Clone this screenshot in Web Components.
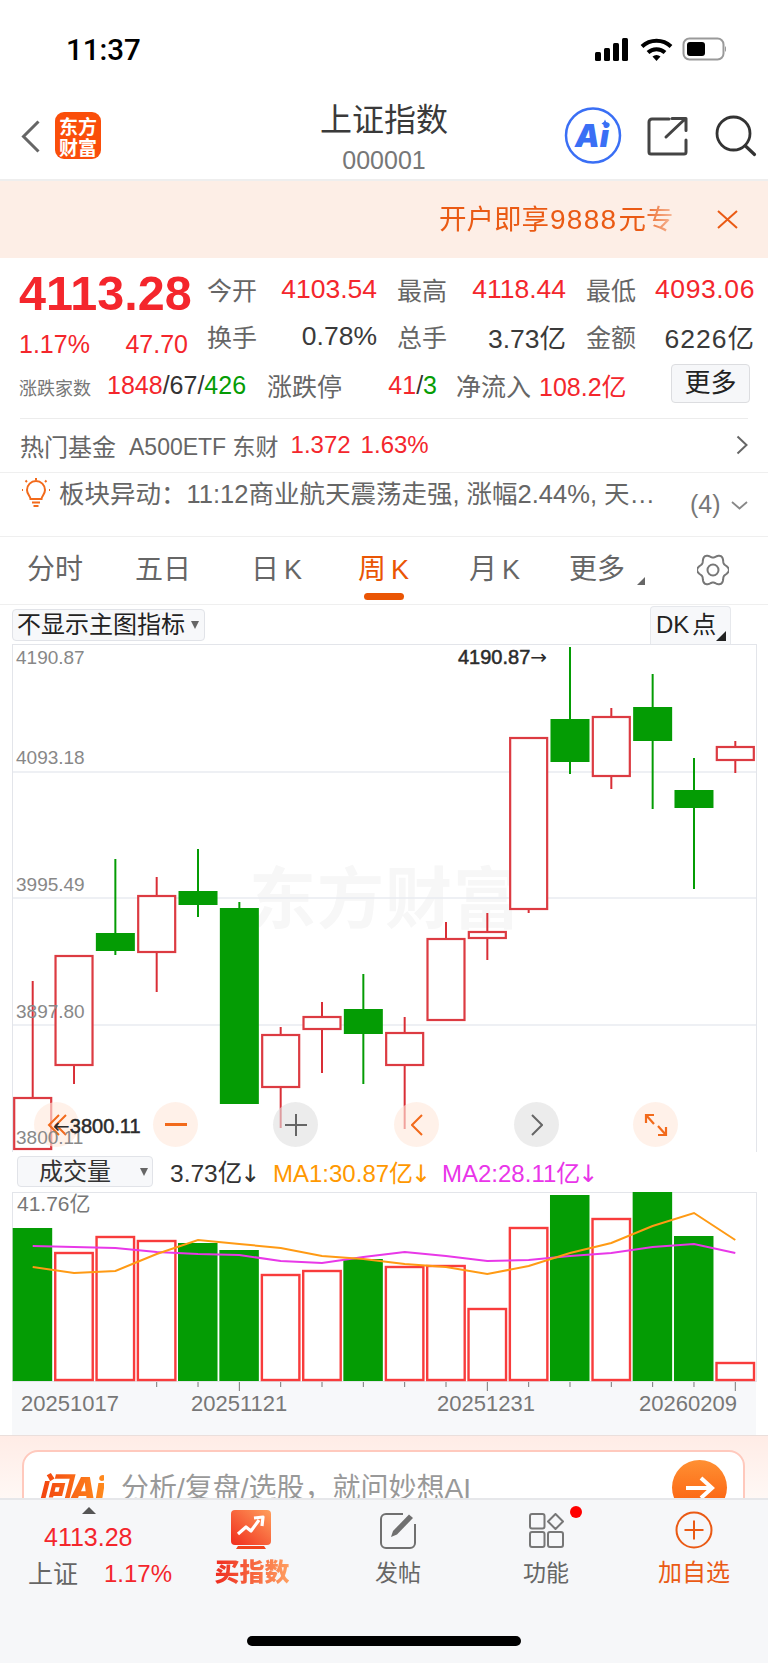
<!DOCTYPE html>
<html lang="zh"><head><meta charset="utf-8"><title>上证指数</title>
<style>
html,body{margin:0;padding:0;background:#fff}
body{width:768px;height:1663px;overflow:hidden;font-family:"Liberation Sans","Noto Sans CJK SC",sans-serif;color:#333}
</style></head><body>
<status-bar></status-bar>
<nav-header></nav-header>
<promo-banner></promo-banner>
<quote-panel></quote-panel>
<fund-row></fund-row>
<alert-row></alert-row>
<period-tabs></period-tabs>
<chart-toolbar></chart-toolbar>
<kline-chart></kline-chart>
<volume-legend></volume-legend>
<volume-chart></volume-chart>
<ai-ask></ai-ask>
<bottom-bar></bottom-bar>
<script>
const FONT='"Liberation Sans","Noto Sans CJK SC",sans-serif';
function def(name,css,html,init){
  customElements.define(name,class extends HTMLElement{
    constructor(){super();const r=this.attachShadow({mode:'open'});
      r.innerHTML='<style>:host{display:block;box-sizing:border-box;font-family:'+FONT+'}*{box-sizing:border-box}'+css+'</style>'+html;
      if(init)init(r);}
  });
}
const RED='#f4262c',GREEN='#049c04',GREY='#666';

def('status-bar',`:host{height:88px;position:relative}
.row{display:flex;height:88px;align-items:flex-start;padding:33px 0 0 66px}
.t{font:500 29.5px/34px Roboto,sans-serif;color:#000;flex:1}
svg{display:block;margin-top:4px;margin-right:42px}`,
`<div class="row"><span class="t">11:37</span>
<svg width="131" height="24" viewBox="0 0 131 24">
<g fill="#000"><rect x="0" y="15" width="6" height="9" rx="1.5"/><rect x="9" y="11" width="6" height="13" rx="1.5"/><rect x="18" y="6" width="6" height="18" rx="1.5"/><rect x="27" y="1" width="6" height="23" rx="1.5"/></g>
<g fill="none" stroke="#000" stroke-width="4"><path d="M47 9.5a21 21 0 0 1 29 0"/><path d="M53 15.5a12.500 12.500 0 0 1 17 0"/></g><path d="M57.500 19.500a6 6 0 0 1 8 0l-4 4.500z" fill="#000"/>
<rect x="88.500" y="1.500" width="40" height="21" rx="6" fill="none" stroke="#9a9a9a" stroke-width="2"/><rect x="92" y="5" width="18" height="14" rx="3" fill="#000"/><path d="M130 9v6a3 3 0 0 0 1-3 3 3 0 0 0-1-3z" fill="#9a9a9a"/>
</svg></div>`);

def('nav-header',`:host{height:91px;position:relative}
.c{display:flex;height:91px;align-items:flex-start;padding-top:20px;padding-left:21px}
.logo{width:46px;height:47px;margin-left:15px;margin-top:4px;border-radius:9px;background:#fa4e0a;color:#fff;display:flex;flex-direction:column;align-items:center;justify-content:center;gap:0;position:relative;z-index:1}
.logo span{font:700 19px/21px "Noto Sans CJK SC",sans-serif;display:block}
.mid{position:absolute;left:0;right:0;top:10px;text-align:center;pointer-events:none}
.ti{font:400 32px/38px "Noto Sans CJK SC",sans-serif;color:#3a3a3a}
.co{font:400 25px/28px "Liberation Sans",sans-serif;color:#777;margin-top:10px;}
.ai{position:absolute;left:564px;top:19px}
.sh{position:absolute;left:647px;top:28px}
.se{position:absolute;left:715px;top:27px}
.ait{font:italic 900 31px Inter,"Liberation Sans",sans-serif;fill:#3a6ff5}`,
`<div class="c">
<svg width="19" height="33" viewBox="0 0 19 33" style="margin-top:12px"><path d="M17.500 1.500 2.500 16.500l15 15" fill="none" stroke="#666" stroke-width="3"/></svg>
<div class="logo"><span>东方</span><span>财富</span></div>
<svg class="ai" width="58" height="58" viewBox="0 0 58 58"><circle cx="29" cy="28.500" r="27" fill="#fff" stroke="#3a6ff5" stroke-width="2.500"/><text class="ait" x="11" y="40">Ai</text><path d="M41 12.500q.6 3 3.500 4-2.900 1-3.500 4-.6-3-3.500-4 2.900-1 3.500-4z" fill="#3a6ff5"/></svg>
<svg class="sh" width="41" height="40" viewBox="0 0 41 40"><path d="M22 3H5a3 3 0 0 0-3 3v30a2 2 0 0 0 2 2h33a2 2 0 0 0 2-2V24M19 21 38 3M25 2.500h14v12" fill="none" stroke="#444" stroke-width="3" stroke-linecap="round" stroke-linejoin="round"/></svg>
<svg class="se" width="42" height="42" viewBox="0 0 42 42"><circle cx="18.500" cy="18.500" r="16.500" fill="none" stroke="#333" stroke-width="2.800"/><path d="m30.500 31 9 8.500" stroke="#333" stroke-width="3.200" stroke-linecap="round"/></svg>
</div>
<div class="mid"><div class="ti">上证指数</div><div class="co">000001</div></div>`);

def('promo-banner',`:host{height:79px;background:#fdeee6;border-top:2px solid #eeeeee;position:relative}
.row{display:flex;align-items:center;justify-content:flex-end;height:77px;padding-right:30px}
.txt{width:252px;white-space:nowrap;color:#ea5a14;font:400 27.500px/34px "Liberation Sans","Noto Sans CJK SC",sans-serif;-webkit-mask-image:linear-gradient(to right,#000 80%,transparent 100%);mask-image:linear-gradient(to right,#000 80%,transparent 100%);margin-right:26px}
.txt b{font-weight:400;font-size:28px;letter-spacing:1.300px;margin:0 1px 0 1px}
svg{display:block}`,
`<div class="row"><div class="txt">开户即享<b>9888</b>元专</div><svg width="21" height="19" viewBox="0 0 21 19"><path d="M1 1l19 17M20 1 1 18" stroke="#ea5a14" stroke-width="2" fill="none"/></svg></div>`);

def('quote-panel',`:host{height:161px;padding-top:8px;color:#333}
.g{display:grid;grid-template-columns:188px 50px 120px 20px 50px 119px 20px 49px 120px;grid-template-rows:46px 48px;padding-left:19px;align-items:center;font-size:26.500px}
.l{color:#666;font-size:25px;font-weight:400;white-space:nowrap}
.v{text-align:right;white-space:nowrap}
.r{color:${RED}}
.d{color:#3a3a3a}
.p{font-weight:700;font-size:48.500px;line-height:50px;color:${RED};margin-top:7px;white-space:nowrap}
.s{display:flex;justify-content:space-between;color:${RED};font-size:25px;width:169px;margin-top:17px}
.h{display:grid;grid-template-columns:88px 160px 76px 113px 83px 132px 79px;height:50px;padding-left:19px;align-items:center;font-size:25px}
.sm{font-size:18px;color:#777;white-space:nowrap;margin-top:4px}
.g2{color:${GREEN}}
.btn{width:79px;height:39px;background:#f6f7f9;border:1px solid #dcdde0;border-radius:4px;font-size:26px;line-height:37px;text-align:center;color:#222;margin-top:-3px}
.line{height:1px;background:#ececec;margin:8px 20px 0 20px}`,
`<div class="g">
<div class="p">4113.28</div><div class="l">今开</div><div class="v r">4103.54</div><i></i><div class="l">最高</div><div class="v r">4118.44</div><i></i><div class="l">最低</div><div class="v r" style="letter-spacing:.6px">4093.06</div>
<div class="s"><span>1.17%</span><span>47.70</span></div><div class="l">换手</div><div class="v d">0.78%</div><i></i><div class="l">总手</div><div class="v d">3.73亿</div><i></i><div class="l">金额</div><div class="v d" style="letter-spacing:1px">6226亿</div>
</div>
<div class="h"><div class="sm">涨跌家数</div><div><span class="r">1848</span>/67/<span class="g2">426</span></div><div class="l">涨跌停</div><div class="v" style="padding-right:19px"><span class="r">41</span>/<span class="g2">3</span></div><div class="l">净流入</div><div class="r" style="white-space:nowrap">108.2亿</div><div class="btn">更多</div></div>
<div class="line"></div>`);

def('fund-row',`:host{height:54px;border-bottom:1px solid #efefef}
.r{display:flex;height:52px;align-items:center;padding-left:20px;font-size:24px;white-space:nowrap;color:#666}
.n{margin-left:13px;font-size:23px}
.v{color:${RED}}
svg{margin-left:auto;margin-right:20px}`,
`<div class="r"><span>热门基金</span><span class="n">A500ETF 东财</span><span class="v" style="margin-left:12px">1.372</span><span class="v" style="margin-left:10px">1.63%</span>
<svg width="12" height="20" viewBox="0 0 12 20"><path d="M1.500 1.500 10.500 10l-9 8.500" fill="none" stroke="#666" stroke-width="2"/></svg></div>`);

def('alert-row',`:host{height:64px;border-bottom:1px solid #efefef;position:relative}
.r{padding:5px 0 0 22px;font-size:25.500px;color:#666;white-space:nowrap;display:flex;align-items:flex-start}
.tx{margin-left:9px;line-height:30px;margin-top:1px}
.n{position:absolute;left:690px;top:16px;line-height:30px;font-size:25px;color:#777}
svg.c{position:absolute;left:731px;top:28px}`,
`<div class="r"><svg width="28" height="30" viewBox="0 0 28 30" style="display:block;flex:none"><g fill="none" stroke="#f26a1b" stroke-width="2"><path d="M8.500 21c0-3-3.500-4.500-3.500-9a9 9 0 0 1 18 0c0 4.500-3.500 6-3.500 9z"/><path d="M10 24.500h8M11.500 28h5M14 0v2M1 12H0M28 12h-1M3.500 2.500l1.500 1.500M24.500 2.500 23 4"/></g></svg>
<span class="tx">板块异动：11:12商业航天震荡走强, 涨幅2.44%, 天…</span></div><span class="n">(4)</span><svg class="c" width="17" height="9" viewBox="0 0 17 9"><path d="M1 1l7.500 6.500L16 1" fill="none" stroke="#888" stroke-width="1.800"/></svg>`);

const gearPts=(()=>{let p=[];for(let i=0;i<120;i++){const t=i/120*2*Math.PI,r=14.2+1.7*Math.cos(6*t);p.push((16+r*Math.cos(t)).toFixed(2)+','+(16+r*Math.sin(t)).toFixed(2));}return p.join(' ');})();

def('period-tabs',`:host{height:68px;border-bottom:1px solid #efefef;position:relative}
.r{position:relative;height:67px;font-size:28px;color:#666;white-space:nowrap}
span{position:absolute;top:15px;line-height:36px}
.a{color:#ea5504}
.u{position:absolute;left:364px;top:56px;width:40px;height:7px;border-radius:3.500px;background:#ea5504}
.k{font-size:27px;margin-left:5px;font-weight:400}
svg{position:absolute}`,
`<div class="r"><span style="left:27px">分时</span><span style="left:135px">五日</span><span style="left:251px">日<b class="k">K</b></span><span class="a" style="left:358px">周<b class="k">K</b></span><span style="left:469px">月<b class="k">K</b></span><span style="left:569px">更多</span>
<svg style="left:637px;top:40px" width="8" height="8" viewBox="0 0 8 8"><path d="M8 0v8H0z" fill="#666"/></svg>
<svg style="left:696.500px;top:16.500px" width="32" height="32" viewBox="0 0 32 32"><polygon points="${gearPts}" fill="none" stroke="#777" stroke-width="2"/><circle cx="16" cy="16" r="5.500" fill="none" stroke="#777" stroke-width="2"/></svg>
<div class="u"></div></div>`);

def('chart-toolbar',`:host{height:39px;position:relative}
.r{display:flex;align-items:flex-start;padding-left:12px}
.a{height:32px;width:193px;margin-top:4px;background:#f7f8fa;border:1px solid #e1e3e8;border-radius:4px;font-size:24px;line-height:30px;padding-left:4px;color:#222;position:relative;white-space:nowrap}
.a::after{content:"";position:absolute;left:178px;top:11px;border:4px solid transparent;border-top:8px solid #666;border-bottom:0}
.b{height:38px;width:81px;margin-left:445px;margin-top:1px;background:#f7f8fa;border:1px solid #e6e8ec;border-bottom:0;border-radius:4px 4px 0 0;font-size:24px;line-height:36px;padding-left:5px;color:#222;position:relative;white-space:nowrap}
.b i{font-style:normal;margin-left:3px}
.b::after{content:"";position:absolute;right:4px;bottom:3px;border-style:solid;border-width:0 0 10px 10px;border-color:transparent transparent #222 transparent}`,
`<div class="r"><div class="a">不显示主图指标</div><div class="b">DK<i>点</i></div></div>`);

const CX=i=>32.7+i*41.33;
const CANDLES=[
['r',981,1098,1149,1149],['r',956,956,1065,1084],['g',859,933,951,955],['r',877,896,952,992],['g',849,891,905,917],['g',902,908,1104,1104],
['r',1027,1035,1087,1128],['r',1002,1017,1029,1073],['g',974,1009,1034,1084],['r',1017,1033,1065,1129],['r',922,939,1020,1020],['r',913,932,938,960],
['r',737,738,909,913],['g',647,719,762,774],['r',708,717,776,789],['g',674,707,741,809],['g',758,790,808,889],['r',741,747,760,773]];

def('kline-chart',`:host{height:508px;position:relative;overflow:hidden}
.box{position:absolute;left:12px;top:0;width:745px;height:509px;border:1px solid #e3e5ea}
svg{position:absolute;left:0;top:0}
.wm{position:absolute;left:249px;top:210px;font:700 67px/80px "Noto Sans CJK SC",sans-serif;color:#f7f7f7;white-space:nowrap;letter-spacing:1px}
.lb{position:absolute;left:16px;font-size:19px;line-height:22px;color:#888;white-space:nowrap}
.mk{position:absolute;font-size:20px;line-height:24px;color:#2b2b2b;white-space:nowrap;-webkit-text-stroke:.5px #2b2b2b}
.mk i{font:normal 400 20px/24px "DejaVu Sans",sans-serif;-webkit-text-stroke:0}
.btn{position:absolute;top:458px;width:45px;height:45px;border-radius:50%;display:flex;align-items:center;justify-content:center}
.o{background:rgba(255,232,220,.62)}.g{background:rgba(225,225,225,.62)}`,
`<div class="wm">东方财富</div><div class="box"></div>
<svg id="s" width="768" height="508" viewBox="0 644 768 508"></svg>
<span class="lb" style="top:3px">4190.87</span><span class="lb" style="top:103px">4093.18</span><span class="lb" style="top:230px">3995.49</span><span class="lb" style="top:357px">3897.80</span>
<div class="btn o" style="left:34px"><svg style="position:static" width="20" height="24" viewBox="0 0 20 24"><path d="M12 2 2 12l10 10M19 2 9 12l10 10" fill="none" stroke="#f26a1b" stroke-width="2"/></svg></div>
<div class="btn o" style="left:153px"><svg style="position:static" width="22" height="4"><rect width="22" height="3" fill="#f26a1b"/></svg></div>
<div class="btn g" style="left:273px"><svg style="position:static" width="22" height="22" viewBox="0 0 22 22"><path d="M0 11h22M11 0v22" stroke="#666" stroke-width="2"/></svg></div>
<div class="btn o" style="left:394px"><svg style="position:static" width="12" height="22" viewBox="0 0 12 22"><path d="M11 1 1 11l10 10" fill="none" stroke="#f26a1b" stroke-width="2"/></svg></div>
<div class="btn g" style="left:514px"><svg style="position:static" width="12" height="22" viewBox="0 0 12 22"><path d="m1 1 10 10L1 21" fill="none" stroke="#666" stroke-width="2"/></svg></div>
<div class="btn o" style="left:633px"><svg style="position:static" width="24" height="24" viewBox="0 0 24 24"><path d="M2 10V2h8M2 2l8 9M22 14v8h-8M22 22l-8-9" fill="none" stroke="#f26a1b" stroke-width="2.200"/></svg></div>
<span class="lb" style="top:483px">3800.11</span>
<span class="mk" style="left:458px;top:1px">4190.87<i>→</i></span>
<span class="mk" style="left:53px;top:470px"><i>←</i>3800.11</span>`,
r=>{
  let h='';
  for(const y of [772,898,1025]) h+=`<line x1="13" x2="756" y1="${y}" y2="${y}" stroke="#e9ebf0" stroke-width="1.500"/>`;
  CANDLES.forEach((c,i)=>{
    const x=CX(i),[k,t,a,b,l]=c,col=k=='r'?'#dc3b42':GREEN;
    h+=`<line x1="${x}" x2="${x}" y1="${t}" y2="${l}" stroke="${k=='r'?'#d92e36':GREEN}" stroke-width="2"/>`;
    if(k=='r')h+=`<rect x="${x-18.500}" y="${a}" width="37" height="${b-a}" fill="#fff" stroke="${col}" stroke-width="2.200"/>`;
    else h+=`<rect x="${x-19.500}" y="${a}" width="39" height="${b-a}" fill="${col}"/>`;
  });
  r.getElementById('s').innerHTML=h;
});

def('volume-legend',`:host{height:40px;position:relative}
.r{display:flex;align-items:center;height:40px;padding-left:17px;font-size:24.500px;white-space:nowrap;padding-bottom:1px}
.dd{width:136px;height:31px;flex:none;background:#f7f8fa;border:1px solid #e1e3e8;border-radius:4px;line-height:29px;padding-left:21px;color:#333;position:relative;margin-right:17px;font-size:24px}
.dd::after{content:"";position:absolute;left:122px;top:11px;border:4.500px solid transparent;border-top:8px solid #666;border-bottom:0}
.a{width:103px}.o{color:#ff9800;width:169px;font-size:24px}.m{color:#e935e9;font-size:24px}
i{font:normal 400 24px "DejaVu Sans",sans-serif;margin-left:-2px}`,
`<div class="r"><div class="dd">成交量</div><span class="a">3.73亿<i>↓</i></span><span class="o">MA1:30.87亿<i>↓</i></span><span class="m">MA2:28.11亿<i>↓</i></span></div>`);

const VT=[1228,1253,1237,1241,1243,1250,1275,1271,1259,1267,1266,1309,1228,1195,1219,1192,1236,1363];
const VC='grrrggrrgrrrrgrggr';
const MA1=[1267,1273,1271,1254,1240,1244,1248,1256,1259,1264,1267,1274,1266,1253,1243,1226,1213,1240];
const MA2=[1246,1247,1248,1252,1254,1255,1261,1263,1257,1252,1256,1261,1260,1256,1253,1247,1244,1253];

def('volume-chart',`:host{height:243px;position:relative}
.bg{position:absolute;left:12px;width:744px;top:189px;height:54px;background:#f7f8fa;border-top:1px solid #e3e5ea}
.box{position:absolute;left:12px;top:0;width:745px;height:190px;border:1px solid #e3e5ea;border-bottom:0}
svg{position:absolute;left:0;top:0}
.v{position:absolute;left:17px;top:0;font-size:21px;line-height:24px;color:#777;white-space:nowrap}
.d{position:absolute;top:199px;font-size:22px;line-height:26px;color:#777}`,
`<div class="bg"></div><div class="box"></div><svg id="s" width="768" height="243" viewBox="0 1192 768 243"></svg>
<span class="v">41.76亿</span><span class="d" style="left:21px">20251017</span><span class="d" style="left:191px">20251121</span><span class="d" style="left:437px">20251231</span><span class="d" style="left:639px">20260209</span>`,
r=>{
  let h='';
  VT.forEach((t,i)=>{
    const x=CX(i),g=VC[i]=='g';
    h+=g?`<rect x="${x-20}" y="${t}" width="39.500" height="${1381-t}" fill="${GREEN}"/>`
       :`<rect x="${x-18.800}" y="${t}" width="37.500" height="${1380-t}" fill="#fff" stroke="#f83c3c" stroke-width="2.400"/>`;
  });
  for(let i=3;i<18;i++){
    const long=i==5||i==11||i==17;
    h+=`<line x1="${CX(i)}" x2="${CX(i)}" y1="1382" y2="${long?1391:1387}" stroke="#777" stroke-width="1"/>`;
  }
  const pts=a=>a.map((y,i)=>CX(i).toFixed(1)+','+y).join(' ');
  h+=`<polyline points="${pts(MA2)}" fill="none" stroke="#e838e8" stroke-width="2"/>`;
  h+=`<polyline points="${pts(MA1)}" fill="none" stroke="#ff9a14" stroke-width="2"/>`;
  r.getElementById('s').innerHTML=h;
});

def('ai-ask',`:host{height:63px;overflow:hidden;background:linear-gradient(#ffece6,#fff8f5);border-top:1px solid #eadfdc;position:relative}
.card{display:flex;align-items:flex-start;height:70px;margin:14px 23px 0 22px;background:#fff;border:2px solid #ffc9bd;border-radius:16px;padding:9px 16px 0 14px}
.lg{font:italic 900 33px/38px Inter,"Noto Sans CJK SC",sans-serif;background:linear-gradient(90deg,#f2410f,#ff8a1e);-webkit-background-clip:text;background-clip:text;color:transparent;width:66px;margin-top:9px;white-space:nowrap;letter-spacing:-1px;flex:none}
.t{margin-left:17px;font-size:28px;line-height:40px;margin-top:8px;color:#999;white-space:nowrap;flex:1}
.go{width:55px;height:55px;flex:none;border-radius:50%;background:linear-gradient(#ff9033,#fb5a0a);display:flex;align-items:center;justify-content:center;margin-top:-1px}`,
`<div class="card"><div class="lg">问Ai</div><div class="t">分析/复盘/选股，就问妙想AI</div><div class="go"><svg width="30" height="24" viewBox="0 0 30 24"><path d="M1 12h26M16 2l11 10-11 10" fill="none" stroke="#fff" stroke-width="4"/></svg></div></div>`);

def('bottom-bar',`:host{height:165px;background:#f6f7f9;border-top:2px solid #e6e7ea;position:relative}
.r{display:grid;grid-template-columns:178px 146px 148px 148px 148px;height:108px;color:#666;text-align:center}
.c{position:relative;font-size:23px}
.q .tr{position:absolute;left:82px;top:7px;border-left:7px solid transparent;border-right:7px solid transparent;border-bottom:7px solid #555}
.q .n{position:absolute;left:44px;top:22px;font-size:25px;line-height:30px;color:${RED}}
.q .lb{position:absolute;left:28px;top:58px;font-size:25px;line-height:32px;color:#666;white-space:nowrap}
.q .p{position:absolute;left:104px;top:58px;font-size:24px;line-height:32px;color:${RED}}
.ic{display:block;margin:10px auto 0}
.lb2{position:absolute;left:0;right:0;top:57px;line-height:32px;font-size:23px}
.buy{font-weight:900;font-size:25px;font-family:"Noto Sans CJK SC",sans-serif;background:linear-gradient(90deg,#ee2a1e,#ffa060);-webkit-background-clip:text;background-clip:text;color:transparent;width:76px;left:36px;top:54px;line-height:32px;position:absolute;white-space:nowrap}
.dot{position:absolute;width:12px;height:12px;border-radius:50%;background:#f00;left:98px;top:6px}
.hm{position:absolute;left:247px;top:136px;width:274px;height:10px;border-radius:5px;background:#000}`,
`<div class="r">
<div class="c q"><i class="tr"></i><span class="n">4113.28</span><span class="lb">上证</span><span class="p">1.17%</span></div>
<div class="c"><svg class="ic" width="40" height="39" viewBox="0 0 40 39"><defs><linearGradient id="g" x1="0" y1="1" x2="1" y2="0"><stop offset="0" stop-color="#f02c1c"/><stop offset="1" stop-color="#ff9f5c"/></linearGradient></defs><path d="M4 0h32a4 4 0 0 1 4 4v27a4 4 0 0 1-4 4H4a4 4 0 0 1-4-4V4a4 4 0 0 1 4-4z" fill="url(#g)"/><path d="M7 36h26l2 3H5z" fill="#f0431e"/><path d="M7 24l8-7 5 4 8-11M23 8l9-1-1 9" fill="none" stroke="#fff" stroke-width="3.200" stroke-linejoin="round"/></svg><span class="buy">买指数</span></div>
<div class="c"><svg class="ic" width="36" height="36" viewBox="0 0 36 36" style="margin-top:13px"><path d="M23 1H6a5 5 0 0 0-5 5v24a5 5 0 0 0 5 5h24a5 5 0 0 0 5-5V11" fill="none" stroke="#707070" stroke-width="2"/><path d="M11 24l2-6L29 1.500l4 3.500-16 16.500z" fill="#707070"/></svg><span class="lb2">发帖</span></div>
<div class="c"><svg class="ic" width="35" height="35" viewBox="0 0 35 35" style="margin-top:13px"><g fill="none" stroke="#777" stroke-width="2"><rect x="1" y="1" width="14.500" height="14.500" rx="2"/><rect x="1" y="19" width="14.500" height="15" rx="2"/><rect x="19" y="19" width="15" height="15" rx="2"/><path d="M26.500 1l7.500 7.500-7.500 7.500-7.500-7.500z" stroke-linejoin="round"/></g></svg><i class="dot"></i><span class="lb2">功能</span></div>
<div class="c" style="color:#ea5a14"><svg class="ic" width="38" height="38" viewBox="0 0 38 38" style="margin-top:11px"><circle cx="19" cy="19" r="17.500" fill="none" stroke="#ea5a14" stroke-width="2"/><path d="M9.500 19h19M19 9.500v19" stroke="#ea5a14" stroke-width="2"/></svg><span class="lb2" style="font-size:24px">加自选</span></div>
</div><div class="hm"></div>`);
</script>
</body></html>
